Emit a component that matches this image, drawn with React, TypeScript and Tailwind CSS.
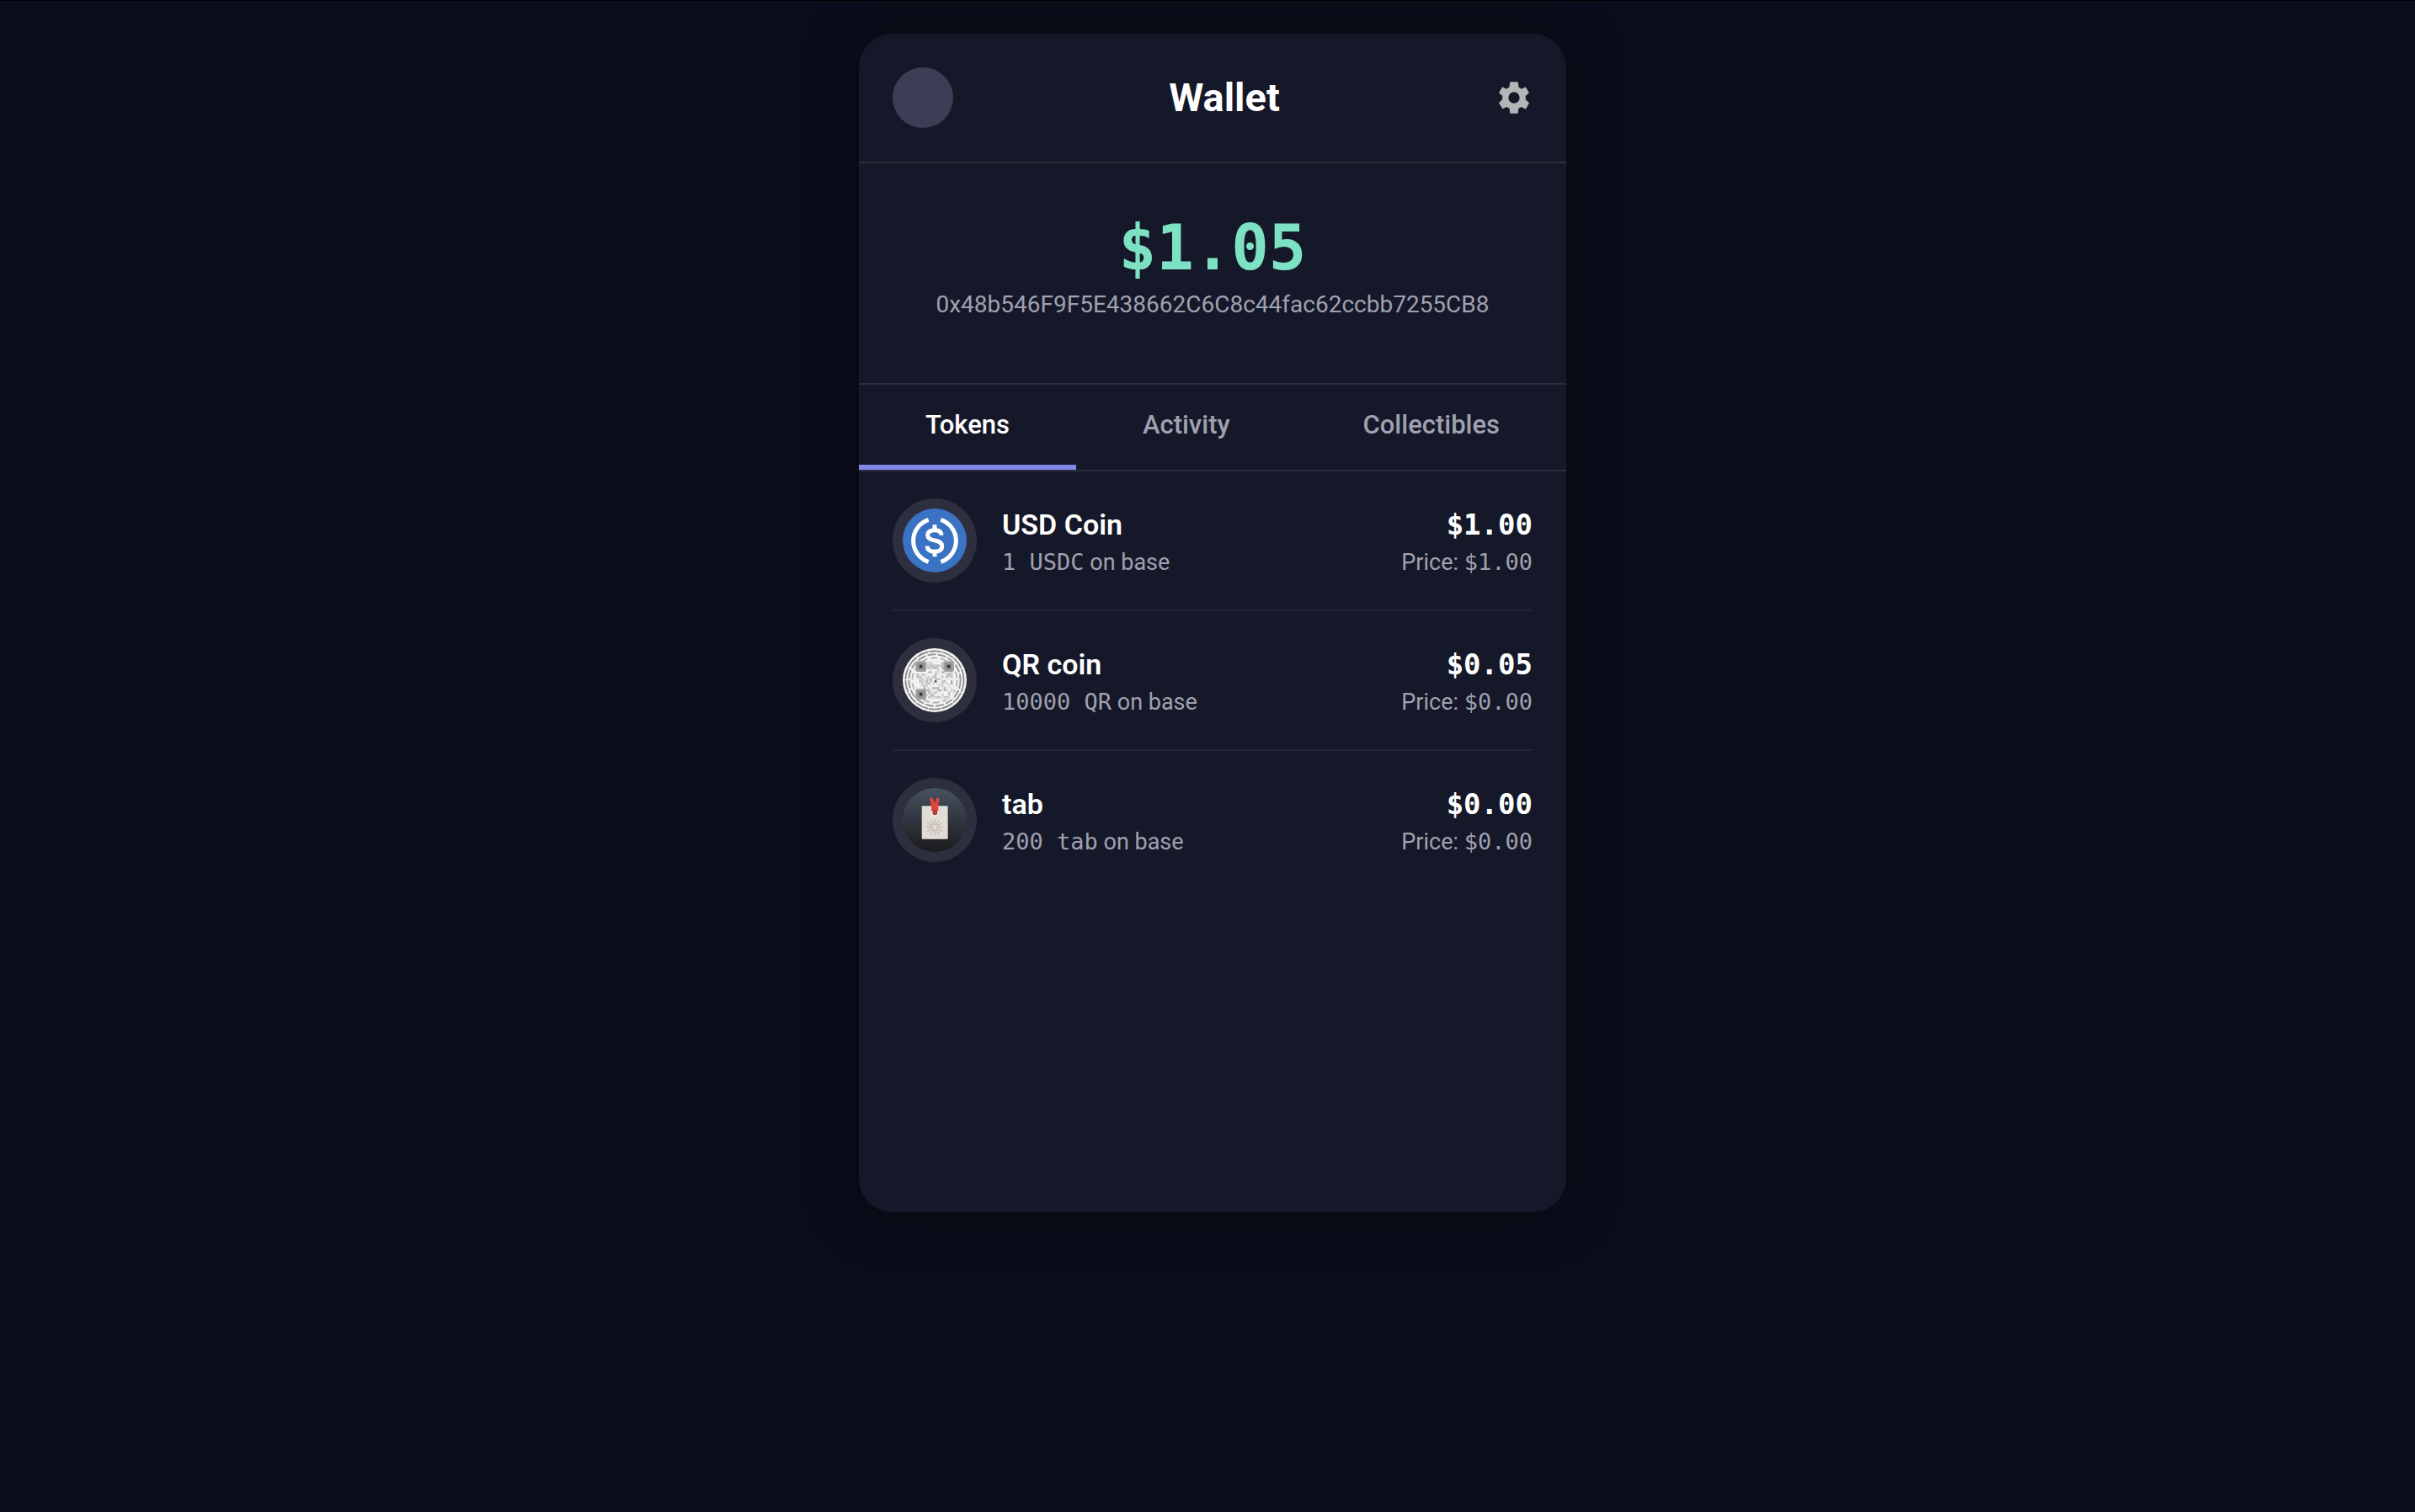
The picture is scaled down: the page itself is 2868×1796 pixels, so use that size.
import type { ReactNode } from 'react';

function GearIcon() {
  return (
    <svg viewBox="-54 -57 108 114" className="h-[38px] w-9" fill="#b4b5b9" aria-hidden="true">
      <path
        fillRule="evenodd"
        d="M-14-56H14L17-37Q22-35 27-31L41-38L54-17L41-6Q42 0 41 6L54 19L42 41L26 33Q21 36 16 38L14 56H-14L-16 38Q-21 36-26 33L-41 40L-54 19L-41 6Q-42 0-41-6L-54-17L-41-38L-27-31Q-22-35-17-37ZM0-20A20 20 0 1 0 0 20A20 20 0 1 0 0-20Z"
      />
    </svg>
  );
}

function UsdCoinLogo() {
  return (
    <svg viewBox="0 0 228 228" className="size-[76px]" aria-hidden="true">
      <circle cx="114" cy="114" r="114" fill="#3a73c4" />
      <g fill="none" stroke="#ffffff" strokeWidth="15">
        <path d="M92 40A79 79 0 0 0 92 190" />
        <path d="M136 40A79 79 0 0 1 136 190" />
        <path d="M138 95C138 82 128 77 114 77C99 77 89 84 89 95C89 107 98 111 115 114C132 117 140 123 140 135C140 147 130 154 114 154C97 154 88 147 87 134" />
        <path d="M114 58V78M114 152V172" />
      </g>
    </svg>
  );
}

// Small deterministic hash, so the speckle of the code is the same on every render.
function shade(x: number, y: number) {
  const n = Math.sin(x * 127.1 + y * 311.7) * 43758.5453;
  return n - Math.floor(n);
}

const GRID = Array.from({ length: 16 * 16 }, (_, i) => ({ x: i % 16, y: Math.floor(i / 16) }));
const FINDERS = [
  [65, 65],
  [164, 65],
  [65, 164],
];

function QrCoinLogo() {
  return (
    <svg viewBox="0 0 228 228" className="size-[76px]" aria-hidden="true">
      <circle cx="114" cy="114" r="114" fill="#f3f3f3" />
      <g fill="none" stroke="#858585">
        <circle cx="114" cy="114" r="104" strokeWidth="5" strokeDasharray="44 3" />
        <circle cx="114" cy="114" r="92" strokeWidth="6" strokeDasharray="30 7" stroke="#989898" />
        <circle cx="114" cy="114" r="80" strokeWidth="5" strokeDasharray="24 12" stroke="#acacac" />
      </g>
      <rect x="46" y="46" width="136" height="136" rx="6" fill="#e9e9e9" />
      {GRID.map(({ x, y }) => (
        <rect
          key={`${x}-${y}`}
          x={50 + x * 8}
          y={50 + y * 8}
          width="8"
          height="8"
          rx="2"
          fill={shade(x, y) > 0.5 ? '#9a9a9a' : '#ffffff'}
          opacity={0.1 + shade(y, x + 7) * 0.65}
        />
      ))}
      {FINDERS.map(([x, y]) => (
        <g key={`${x}-${y}`}>
          <rect x={x - 19} y={y - 19} width="38" height="38" rx="7" fill="#a2a2a2" />
          <rect x={x - 13} y={y - 13} width="26" height="26" rx="6" fill="#939393" />
          <circle cx={x} cy={y} r="8" fill="#707070" />
          <circle cx={x} cy={y} r="4" fill="#1c1c1c" />
        </g>
      ))}
      <circle cx="117" cy="118" r="4" fill="#555555" />
    </svg>
  );
}

const PETALS = [0, 30, 60, 90, 120, 150, 180, 210, 240, 270, 300, 330];

function TabLogo() {
  return (
    <svg viewBox="0 0 228 228" className="size-[76px]" aria-hidden="true">
      <defs>
        <linearGradient id="tab-backdrop" x1="0" y1="0" x2="0" y2="1">
          <stop offset="0" stopColor="#46525f" />
          <stop offset="0.5" stopColor="#30363e" />
          <stop offset="1" stopColor="#1b1b1b" />
        </linearGradient>
      </defs>
      <circle cx="114" cy="114" r="114" fill="url(#tab-backdrop)" />
      <rect x="66" y="66" width="97" height="120" rx="4" fill="#15171a" opacity="0.5" />
      <rect x="68" y="64" width="93" height="118" rx="3" fill="#e1dcd6" />
      <circle cx="115" cy="88" r="11" fill="#a2403b" stroke="#f7f4f0" strokeWidth="4" />
      <path d="M96 38L106 34L114 54L122 34L131 38L127 60V80H102V60Z" fill="#e4443a" />
      <path d="M106 80H123L119 90H110Z" fill="#d23a32" />
      <path d="M102 79H127" stroke="#a92a26" strokeWidth="2" />
      <g stroke="#c9c1b5" strokeWidth="5" strokeLinecap="round">
        {PETALS.map((angle) => (
          <path key={angle} d="M114 130V112" transform={`rotate(${angle} 114 140)`} />
        ))}
      </g>
    </svg>
  );
}

interface Token {
  name: string;
  amount: string;
  chain: string;
  value: string;
  price: string;
  logo: ReactNode;
}

const tokens: Token[] = [
  { name: 'USD Coin', amount: '1 USDC', chain: 'base', value: '$1.00', price: '$1.00', logo: <UsdCoinLogo /> },
  { name: 'QR coin', amount: '10000 QR', chain: 'base', value: '$0.05', price: '$0.00', logo: <QrCoinLogo /> },
  { name: 'tab', amount: '200 tab', chain: 'base', value: '$0.00', price: '$0.00', logo: <TabLogo /> },
];

const tabs = ['Tokens', 'Activity', 'Collectibles'];

function TokenRow({ token }: { token: Token }) {
  return (
    <li className="flex items-center gap-[30px] border-b-2 border-[#222434] py-8 last:border-b-0">
      <div className="flex size-[100px] shrink-0 items-center justify-center rounded-full bg-[#2d2f3e]">
        {token.logo}
      </div>
      <div className="min-w-0 flex-1">
        <h2 className="text-[34px] leading-[52px] font-semibold text-white">{token.name}</h2>
        <p className="text-[27px] leading-[38px] text-[#a0a1b0]">
          <span className="font-['DejaVu_Sans_Mono',monospace]">{token.amount}</span> on {token.chain}
        </p>
      </div>
      <div className="text-right">
        <p className="font-['DejaVu_Sans_Mono',monospace] text-[34px] leading-[52px] font-semibold text-white">
          {token.value}
        </p>
        <p className="text-[27px] leading-[38px] text-[#a0a1b0]">
          Price: <span className="font-['DejaVu_Sans_Mono',monospace]">{token.price}</span>
        </p>
      </div>
    </li>
  );
}

export default function App() {
  return (
    <div className="flex min-h-screen items-start justify-center border-t border-black bg-[#0a0d1b] pt-[39px] pb-10 pl-3 font-['Roboto',sans-serif]">
      <main className="min-h-[1400px] w-full max-w-[840px] overflow-hidden rounded-[40px] bg-[#151828] shadow-[0_0_64px_rgba(8,6,8,0.6)]">
        <header className="flex items-center justify-between border-b-2 border-[#2c2e3d] p-10">
          <button type="button" aria-label="Account" className="size-[72px] rounded-full bg-[#3c3e55]" />
          <h1 className="text-[47px] leading-[72px] font-bold text-white">Wallet</h1>
          <button type="button" aria-label="Settings" className="flex size-11 items-center justify-center">
            <GearIcon />
          </button>
        </header>

        <section className="border-b-2 border-[#2c2e3d] pt-14 pb-[69px] text-center">
          <p className="font-['DejaVu_Sans_Mono',monospace] text-[74px] leading-[88px] font-bold text-[#7de2c3]">$1.05</p>
          <p className="text-[28px] leading-[48px] text-[#a0a1b0]">0x48b546F9F5E438662C6C8c44fac62ccbb7255CB8</p>
        </section>

        <nav className="flex border-b-2 border-[#2c2e3d]">
          {tabs.map((tab, i) => (
            <button
              key={tab}
              type="button"
              aria-current={i === 0 ? 'page' : undefined}
              className={
                i === 0
                  ? 'flex-auto border-b-[6px] border-[#8186e9] py-6 text-[31px] leading-[47px] font-medium text-white'
                  : 'flex-auto border-b-[6px] border-transparent py-6 text-[31px] leading-[47px] font-medium text-[#a0a1b0]'
              }
            >
              {tab}
            </button>
          ))}
        </nav>

        <ul className="px-10">
          {tokens.map((token) => (
            <TokenRow key={token.name} token={token} />
          ))}
        </ul>
      </main>
    </div>
  );
}
